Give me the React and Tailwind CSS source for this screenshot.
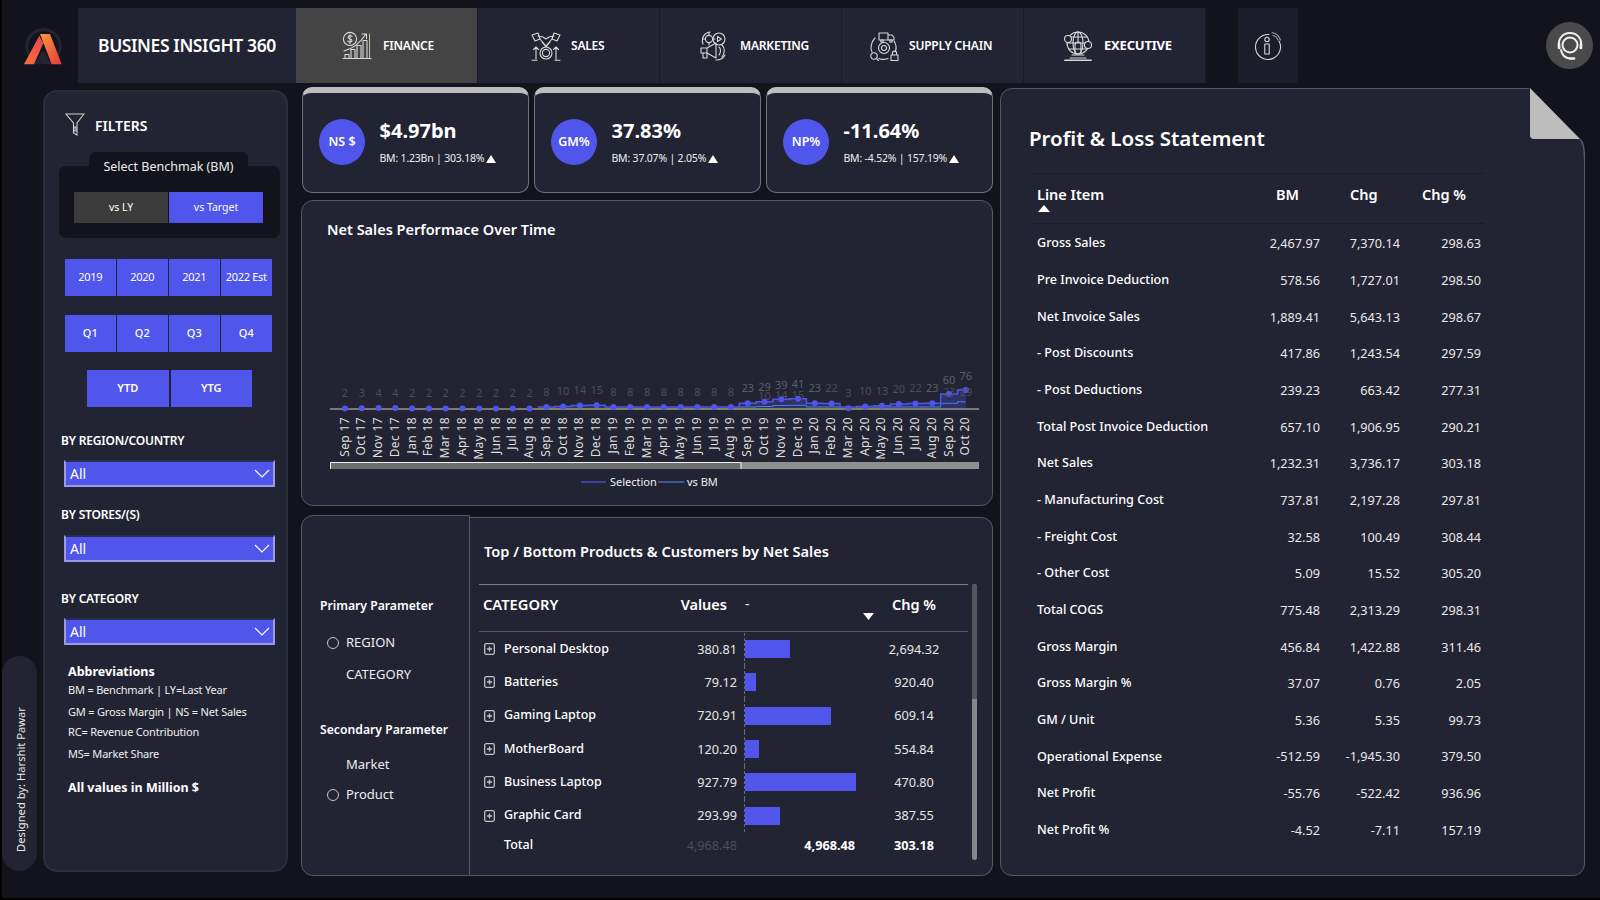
import React from "react";

const FONT = "font-['Noto_Sans','Open_Sans',sans-serif]";
const S = { fill: "none", stroke: "#d9d9d9", strokeWidth: 1.1, strokeLinecap: "round", strokeLinejoin: "round" };

const FinanceIcon = () => (
  <svg width="30" height="30" viewBox="0 0 30 30" {...S}>
    <circle cx="8" cy="8" r="6.6" />
    <path d="M10 5.4c-.8-.9-3.8-1-4 .8-.2 2 4.2 1 4 3.4-.2 1.7-3.2 1.7-4.2.6M8 3.5v9" />
    <path d="M1 27.5h28M3 27.5v-4h4v4M9 27.5v-9h4v9M15 27.5v-13h4v13M21 27.5v-18h4v18" />
    <path d="M2 20c8-2 16-8 22-17M20 3h4.500v4.500" />
    <path d="M27.500 3v24" strokeWidth=".8" />
  </svg>
);
const SalesIcon = () => (
  <svg width="30" height="30" viewBox="0 0 30 30" {...S}>
    <path d="M1 4l6-2 2 6-5 2zM29 4l-6-2-2 6 5 2z" />
    <path d="M7 5l5 1 3 2 3-2 5-1M9 8l6 7 6-7M11 11l4 5 4-5" />
    <circle cx="15" cy="22" r="6" />
    <circle cx="15" cy="22" r="3.600" />
    <path d="M5 28V16M2.500 18.500L5 16l2.500 2.500M25 28V16M22.500 18.500L25 16l2.500 2.500M1 29.300h5M24 29.300h5" />
  </svg>
);
const MarketingIcon = () => (
  <svg width="30" height="30" viewBox="0 0 30 30" {...S}>
    <circle cx="20" cy="8" r="6" />
    <path d="M18.500 5.500l4 2.500-4 2.500z" />
    <circle cx="10" cy="8" r="3.600" />
    <path d="M10 2v2M10 12v2M4 8h2M14 8h2" />
    <path d="M2 17h6l9-5v15l-9-5H2zM8 17v5M4 22v5h4v-5M20 16c2 1.500 2 6 0 8M23 14c3 2.500 3 9 0 12" />
    <path d="M4 13c-2-6 1-11 7-12M26 24c-2 4-6 5-9 5" />
  </svg>
);
const SupplyIcon = () => (
  <svg width="30" height="30" viewBox="0 0 30 30" {...S}>
    <path d="M10 2h9v7h-9zM19 4h4l2 2.500V9h-6" />
    <circle cx="13" cy="10" r="1.300" />
    <circle cx="22" cy="10" r="1.300" />
    <circle cx="15" cy="17" r="5.500" />
    <circle cx="15" cy="17" r="2.500" />
    <path d="M6 7C2 11 1 18 3 21M25 10c2 3 2.500 7 1.500 10M10 27.500c2 1 6 1 9 0" />
    <circle cx="5" cy="25" r="3.200" />
    <path d="M7.500 27.500l2 2" />
    <path d="M22 24h7v5.500h-7zM23.500 24v-2c0-2.500 4-2.500 4 0v2" />
  </svg>
);
const ExecIcon = () => (
  <svg width="30" height="30" viewBox="0 0 30 30" {...S}>
    <circle cx="15" cy="12" r="11" />
    <ellipse cx="15" cy="12" rx="5" ry="11" />
    <path d="M4 12h22M6 6h18M6 18h18M15 1v10" />
    <circle cx="5" cy="8" r="3.500" fill="#222433" />
    <circle cx="25" cy="14" r="3.500" fill="#222433" />
    <path d="M12 22v-8c0-4 6-4 6 0v8M9 24h12M7 27h16" />
    <path d="M2 29.300h26" strokeWidth="1.800" />
  </svg>
);
const InfoIcon = () => (
  <svg width="30" height="30" viewBox="0 0 30 30" {...S}>
    <path d="M26 10A12.500 12.500 0 1 1 16 3.500" />
    <circle cx="14" cy="8.500" r="2.200" />
    <path d="M11.800 13h4.400v10h-4.400z" />
    <path d="M19 1.500c4 .8 7 3.500 8.500 7.500M20 4.500c2.500.5 4 2 5 4.500" stroke="#9a9a9a" />
  </svg>
);
const HeadsetIcon = () => (
  <svg width="30" height="30" viewBox="0 0 30 30" fill="none" stroke="#efefef" strokeWidth="2" strokeLinecap="round">
    <circle cx="15" cy="14" r="7.500" />
    <path d="M4.500 17C2 9 7 2 15 2s13 7 10.500 15" />
    <path d="M4 13v4M26 13v4" strokeWidth="2.600" />
    <path d="M6 19c1 5 4 8 9 8.500" />
    <path d="M15 27.500h4" strokeWidth="2.600" />
  </svg>
);
const Logo = () => (
  <svg width="46" height="48" viewBox="0 0 46 48">
    <defs>
      <linearGradient id="lg1" x1="0" y1="1" x2="1" y2="0">
        <stop offset="0" stopColor="#f4743b" />
        <stop offset="1" stopColor="#e8434f" />
      </linearGradient>
      <linearGradient id="lg2" x1="0" y1="0" x2="1" y2="1">
        <stop offset="0" stopColor="#f59a3c" />
        <stop offset="1" stopColor="#e8393f" />
      </linearGradient>
    </defs>
    <path d="M8 33A16.700 16.700 0 1 1 35 33" fill="none" stroke="#23242f" strokeWidth="3" />
    <path d="M21.300 27L29.700 41.300H12z" fill="#23242f" />
    <path d="M2 41.300H12L21.300 20.300L17.300 12.700z" fill="url(#lg1)" />
    <path d="M18 11H28L39.700 41.300H29.700z" fill="url(#lg2)" />
  </svg>
);

const nav = [
  { t: "FINANCE", I: FinanceIcon, c: "bg-[#444444] pl-[46px]", g: "gap-[11px]", f: "text-[12px] font-semibold" },
  { t: "SALES", I: SalesIcon, c: "pl-[53px]", g: "gap-[10px]", f: "text-[12px] font-semibold" },
  { t: "MARKETING", I: MarketingIcon, c: "pl-[39px]", g: "gap-[11px]", f: "text-[12px] font-semibold" },
  { t: "SUPPLY CHAIN", I: SupplyIcon, c: "pl-[27px]", g: "gap-[10px]", f: "text-[12px] font-semibold" },
  { t: "EXECUTIVE", I: ExecIcon, c: "pl-[39px]", g: "gap-[11px]", f: "text-[13px] font-bold" },
];

const kpis = [
  { k: "NS $", v: "$4.97bn", s: "BM: 1.23Bn | 303.18%" },
  { k: "GM%", v: "37.83%", s: "BM: 37.07% | 2.05%" },
  { k: "NP%", v: "-11.64%", s: "BM: -4.52% | 157.19%" },
];

const years = ["2019", "2020", "2021", "2022 Est"];
const quarters = ["Q1", "Q2", "Q3", "Q4"];

const months = ["Sep 17","Oct 17","Nov 17","Dec 17","Jan 18","Feb 18","Mar 18","Apr 18","May 18","Jun 18","Jul 18","Aug 18","Sep 18","Oct 18","Nov 18","Dec 18","Jan 19","Feb 19","Mar 19","Apr 19","May 19","Jun 19","Jul 19","Aug 19","Sep 19","Oct 19","Nov 19","Dec 19","Jan 20","Feb 20","Mar 20","Apr 20","May 20","Jun 20","Jul 20","Aug 20","Sep 20","Oct 20"];
const vals = [2,3,4,4,2,2,2,2,2,2,2,2,8,10,14,15,8,8,8,8,8,8,8,8,23,29,39,41,23,22,3,10,13,20,22,23,60,76];
const X = (i) => 345 + i * 16.78;
const Y = (v) => 409 - v * 0.25;
const step = (arr, from) => {
  let d = "";
  arr.forEach((v, i) => {
    if (i < from) return;
    d += `${d ? "L" : "M"}${X(i) - 8.4} ${Y(v)}L${X(i) + 8.4 > X(37) ? X(37) : X(i) + 8.4} ${Y(v)}`;
  });
  return d;
};
const bm = vals.map((v, i) => (i >= 12 ? vals[i - 12] : v));

const Chart = () => {
  const line = step(vals, 12);
  const area = `${line}L${X(37)} 409L${X(12) - 8.4} 409Z`;
  return (
    <svg width="690" height="244" viewBox="302 260 690 244" className="block" fontFamily="'Noto Sans','Open Sans',sans-serif">
      <path d={area} fill="#4f55ec" fillOpacity=".28" />
      <path d={step(bm, 24)} fill="none" stroke="#4a7fe0" strokeWidth="1" />
      <path d={line} fill="none" stroke="#4f55ec" strokeWidth="1.500" />
      <path d="M330 409H979" stroke="#77787c" strokeWidth="2" />
      <path d="M537 408.500H880" stroke="#7d8a3c" strokeWidth="1" />
      {vals.map((v, i) => (
        <circle key={i} cx={X(i)} cy={Y(v)} r="3" fill="#4f55ec" />
      ))}
      {vals.map((v, i) => (
        <text key={i} x={X(i)} y={397.5 - v * 0.23} textAnchor="middle" fontSize="11" fill={v >= 23 ? "#5c5e68" : "#4b4d59"}>{v}</text>
      ))}
      {[[25, 10, 400], [26, 14, 399], [27, 15, 399], [36, 23, 396], [37, 29, 396]].map(([i, v, y]) => (
        <text key={i} x={X(i)} y={y} textAnchor="middle" fontSize="11" fill="#4b4d59">{v}</text>
      ))}
      {months.map((m, i) => (
        <text key={m} transform={`translate(${X(i) + 3.5},417) rotate(-90)`} textAnchor="end" fontSize="12" letterSpacing=".35" fill="#dedede">{m}</text>
      ))}
      <rect x="330" y="462" width="649" height="7" fill="#8f8f8f" />
      <rect x="330" y="462" width="411" height="7" fill="#6e6e6e" />
      <path d="M330.500 469V462.500H741V469" fill="none" stroke="#f0f0f0" strokeWidth="1" />
      <path d="M581 482H606" stroke="#4f55ec" strokeWidth="1.200" />
      <text x="610" y="486" fontSize="11" fill="#f0f0f0">Selection</text>
      <path d="M658 482H684" stroke="#4a7fe0" strokeWidth="1.200" />
      <text x="687" y="486" fontSize="11" fill="#f0f0f0">vs BM</text>
    </svg>
  );
};

const cats = [
  ["Personal Desktop", "380.81", 45, "2,694.32"],
  ["Batteries", "79.12", 10.5, "920.40"],
  ["Gaming Laptop", "720.91", 85.5, "609.14"],
  ["MotherBoard", "120.20", 14, "554.84"],
  ["Business Laptop", "927.79", 110.5, "470.80"],
  ["Graphic Card", "293.99", 35, "387.55"],
];

const pl = [
  ["Gross Sales","2,467.97","7,370.14","298.63"],
  ["Pre Invoice Deduction","578.56","1,727.01","298.50"],
  ["Net Invoice Sales","1,889.41","5,643.13","298.67"],
  ["- Post Discounts","417.86","1,243.54","297.59"],
  ["- Post Deductions","239.23","663.42","277.31"],
  ["Total Post Invoice Deduction","657.10","1,906.95","290.21"],
  ["Net Sales","1,232.31","3,736.17","303.18"],
  ["- Manufacturing Cost","737.81","2,197.28","297.81"],
  ["- Freight Cost","32.58","100.49","308.44"],
  ["- Other Cost","5.09","15.52","305.20"],
  ["Total COGS","775.48","2,313.29","298.31"],
  ["Gross Margin","456.84","1,422.88","311.46"],
  ["Gross Margin %","37.07","0.76","2.05"],
  ["GM / Unit","5.36","5.35","99.73"],
  ["Operational Expense","-512.59","-1,945.30","379.50"],
  ["Net Profit","-55.76","-522.42","936.96"],
  ["Net Profit %","-4.52","-7.11","157.19"],
];

const Select = ({ mt }) => (
  <div className={`${mt} ml-[19px] w-[211px] h-[27px] bg-[#5055ec] border-2 border-[#9a9ce0] border-t-[#2a2c50] flex items-center justify-between pl-[4px] pr-[3px]`}>
    <span className="text-[14px] text-white">All</span>
    <svg width="16" height="9" viewBox="0 0 16 9" fill="none" stroke="#fff" strokeWidth="1.200"><path d="M1 1l7 7 7-7" /></svg>
  </div>
);

const Radio = ({ on, label, mt }) => (
  <div className={`${mt} flex items-center h-[18px] pl-[25px] gap-[7px]`}>
    <span className={`w-[12px] h-[12px] rounded-full border ${on ? "border-[#c8c8c8]" : "border-transparent"}`} />
    <span className="text-[13px] text-[#ececec]">{label}</span>
  </div>
);

export default function App() {
  return (
    <div className={`${FONT} w-[1600px] h-[900px] bg-[#12131d] text-white overflow-hidden pt-[8px] border-l-2 border-b-2 border-l-black border-b-black`}>
      {/* Header */}
      <div className="flex h-[75px]">
        <div className="w-[76px] flex items-start pl-[20px] pt-[15px]"><Logo /></div>
        <div className="w-[218px] bg-[#222433] flex items-center pl-[20px] text-[17.500px] font-semibold tracking-[-0.4px] whitespace-nowrap">BUSINES INSIGHT 360</div>
        {nav.map(({ t, I, c, g, f }) => (
          <div key={t} className={`w-[182px] flex items-center border-r border-[#191a27] bg-[#222433] ${c} ${g}`}>
            <I />
            <span className={`${f} tracking-[-0.2px]`}>{t}</span>
          </div>
        ))}
        <div className="ml-[32px] w-[60px] bg-[#1c1d2a] flex items-center justify-center"><InfoIcon /></div>
        <div className="ml-auto mr-[7px] mt-[14px] w-[47px] h-[47px] rounded-full bg-[#4a4a4a] flex items-center justify-center"><HeadsetIcon /></div>
      </div>

      {/* Main */}
      <div className="flex mt-[4px] h-[789px] pl-0">
        {/* Pill */}
        <div className="self-end mb-[5px] w-[35px] h-[215px] rounded-[18px] bg-[#222433] flex items-end justify-center pb-[19px] pl-[3px]">
          <span className="[writing-mode:vertical-rl] rotate-180 text-[11.200px] text-[#e8e8e8] whitespace-nowrap">Designed by: Harshit Pawar</span>
        </div>

        {/* Sidebar */}
        <div className="ml-[6px] mt-[3px] w-[245px] h-[782px] bg-[#222433] rounded-[14px] border-2 border-[#2b2d3b]">
          <div className="flex items-center pt-[21px] pl-[20px] h-[45px]">
            <svg width="20" height="24" viewBox="0 0 20 24" fill="none" stroke="#cfcfcf" strokeWidth="1.100"><path d="M1 1h18l-7 9v12l-3.500-2V10z" /><path d="M9 14h2v4H9z" /></svg>
            <span className="ml-[10px] text-[14px] font-semibold">FILTERS</span>
          </div>
          <div className="mt-[15px] ml-[44px] w-[159px] h-[14px] bg-[#12131d] rounded-t-[6px] relative">
            <span className="absolute left-0 right-0 top-[6px] text-center text-[12.500px] text-[#ececec] whitespace-nowrap">Select Benchmak (BM)</span>
          </div>
          <div className="ml-[14px] w-[221px] h-[72px] bg-[#12131d] rounded-[7px] pt-[26px] pl-[15px] flex">
            <div className="w-[94px] h-[31px] bg-[#3b3b3b] flex items-center justify-center text-[10.500px]">vs LY</div>
            <div className="ml-[1px] w-[94px] h-[31px] bg-[#5055ec] flex items-center justify-center text-[10.500px]">vs Target</div>
          </div>
          <div className="mt-[21px] ml-[20px] flex gap-[1.500px]">
            {years.map((y) => (
              <div key={y} className="w-[50.500px] h-[37px] bg-[#5055ec] flex items-center justify-center text-[11px] whitespace-nowrap tracking-[-0.3px]">{y}</div>
            ))}
          </div>
          <div className="mt-[19px] ml-[20px] flex gap-[1.500px]">
            {quarters.map((y) => (
              <div key={y} className="w-[50.500px] h-[37px] bg-[#5055ec] flex items-center justify-center text-[11px] font-medium">{y}</div>
            ))}
          </div>
          <div className="mt-[18px] ml-[42px] flex gap-[2px]">
            {["YTD", "YTG"].map((y) => (
              <div key={y} className="w-[81.500px] h-[37px] bg-[#5055ec] flex items-center justify-center text-[11px] font-semibold">{y}</div>
            ))}
          </div>
          <div className="mt-[25px] ml-[16px] text-[12px] font-semibold h-[17px] leading-[17px] tracking-[-0.2px]">BY REGION/COUNTRY</div>
          <Select mt="mt-[11px]" />
          <div className="mt-[19px] ml-[16px] text-[12px] font-semibold h-[17px] leading-[17px] tracking-[-0.2px]">BY STORES/(S)</div>
          <Select mt="mt-[12px]" />
          <div className="mt-[28px] ml-[16px] text-[12px] font-semibold h-[17px] leading-[17px] tracking-[-0.2px]">BY CATEGORY</div>
          <Select mt="mt-[11px]" />
          <div className="mt-[18px] ml-[23px] text-[12.500px] font-bold h-[17px] leading-[17px]">Abbreviations</div>
          <div className="mt-[1px] ml-[23px] text-[11px] h-[18px] leading-[18px] tracking-[-0.2px] text-[#eee]">BM = Benchmark | LY=Last Year</div>
          <div className="mt-[4px] ml-[23px] text-[11px] h-[18px] leading-[18px] tracking-[-0.2px] text-[#eee]">GM = Gross Margin | NS = Net Sales</div>
          <div className="mt-[2px] ml-[23px] text-[11px] h-[18px] leading-[18px] tracking-[-0.2px] text-[#eee]">RC= Revenue Contribution</div>
          <div className="mt-[4px] ml-[23px] text-[11px] h-[18px] leading-[18px] tracking-[-0.2px] text-[#eee]">MS= Market Share</div>
          <div className="mt-[16px] ml-[23px] text-[12.500px] font-bold h-[18px] leading-[18px]">All values in Million $</div>
        </div>

        {/* Middle */}
        <div className="ml-[13px] w-[692px] flex flex-col">
          <div className="flex gap-[5px] pl-[1px] h-[106px]">
            {kpis.map((k) => (
              <div key={k.k} className="w-[227px] h-[106px] bg-[#222433] rounded-[10px] border-[1.500px] border-[#6e7080] border-t-[6px] border-t-[#bdbdbd] flex items-start pt-[26px] pl-[16px]">
                <div className="w-[46px] h-[46px] rounded-full bg-[#5055ec] flex items-center justify-center text-[12.500px] font-semibold shrink-0">{k.k}</div>
                <div className="ml-[14.500px] -mt-[2px]">
                  <div className="text-[20px] font-bold leading-[28px]">{k.v}</div>
                  <div className="mt-[6px] text-[10.500px] leading-[15px] whitespace-nowrap tracking-[-0.2px] text-[#eee] flex items-center gap-[2px]">
                    <span>{k.s}</span>
                    <svg width="10" height="8" viewBox="0 0 10 8"><path d="M0 8h10L5 0z" fill="#fff" /></svg>
                  </div>
                </div>
              </div>
            ))}
          </div>

          <div className="mt-[7px] h-[306px] bg-[#222433] rounded-[12px] border-[1.500px] border-[#565868] overflow-hidden">
            <div className="h-[58.500px] pt-[17px] pl-[25px] text-[14.500px] font-semibold leading-[22px]">Net Sales Performace Over Time</div>
            <Chart />
          </div>

          <div className="mt-[9px] h-[361px] flex">
            {/* Parameters */}
            <div className="w-[169px] h-[361px] bg-[#222433] rounded-l-[12px] border-[1.500px] border-[#565868] pt-[81px]">
              <div className="pl-[18px] text-[12.200px] font-semibold h-[18px] leading-[18px] whitespace-nowrap">Primary Parameter</div>
              <Radio on label="REGION" mt="mt-[19px]" />
              <Radio label="CATEGORY" mt="mt-[14px]" />
              <div className="mt-[37px] pl-[18px] text-[12.200px] font-semibold h-[18px] leading-[18px] whitespace-nowrap">Secondary Parameter</div>
              <Radio label="Market" mt="mt-[17px]" />
              <Radio on label="Product" mt="mt-[12px]" />
            </div>
            {/* Table */}
            <div className="mt-[2px] w-[523px] h-[359px] bg-[#222433] rounded-r-[12px] border-[1.500px] border-l-0 border-[#565868]">
              <div className="h-[66px] pt-[22px] pl-[14px] text-[14.600px] font-semibold leading-[22px] whitespace-nowrap">Top / Bottom Products &amp; Customers by Net Sales</div>
              <div className="flex">
                <div className="ml-[9px] w-[489px]">
                  <div className="h-[47.500px] border-t-[1.500px] border-b-[1.500px] border-t-[#7a7c88] border-b-[#565868] grid grid-cols-[258px_7px_136px_68px] relative">
                    <div className="relative pl-[4px] pt-[8px] text-[14.700px] font-semibold leading-[22px]">CATEGORY<span className="absolute right-[10px] top-[8px] text-[14.500px]">Values</span></div>
                    <div />
                    <div className="pt-[8px] text-[14px] leading-[22px] relative pl-[1px]">-<svg className="absolute left-[119px] top-[28px]" width="11" height="7" viewBox="0 0 11 7"><path d="M0 0h11L5.500 7z" fill="#fff" /></svg></div>
                    <div className="pt-[8px] text-center text-[14.500px] font-semibold leading-[22px] whitespace-nowrap">Chg %</div>
                  </div>
                  <div className="pt-[1px]">
                    {cats.map(([n, v, w, c]) => (
                      <div key={n} className="h-[33.300px] grid grid-cols-[258px_7px_136px_68px] items-center text-[12.700px]">
                        <div className="flex items-center pl-[5px]">
                          <svg width="11" height="12" viewBox="0 0 11 12" fill="none" stroke="#c4c4c4" strokeWidth="1.300"><rect x=".7" y=".7" width="9.600" height="10.600" rx="1.500" /><path d="M3 6h5M5.500 3.500v5" /></svg>
                          <span className="ml-[9px] font-medium text-[12.500px]">{n}</span>
                          <span className="ml-auto text-[#e6e6e6]">{v}</span>
                        </div>
                        <div />
                        <div className="h-full flex items-center border-l border-dashed border-[#6a6b75]">
                          <div className="h-[18px] bg-[#5055ec]" style={{ width: w }} />
                        </div>
                        <div className="text-center text-[#e6e6e6] whitespace-nowrap">{c}</div>
                      </div>
                    ))}
                  </div>
                  <div className="h-[26px] grid grid-cols-[258px_7px_136px_68px] items-center text-[12.700px]">
                    <div className="flex pl-[25px]">
                      <span className="font-medium text-[12.500px]">Total</span>
                      <span className="ml-auto text-[#4b4d59]">4,968.48</span>
                    </div>
                    <div />
                    <div className="pr-[25px] text-right font-bold">4,968.48</div>
                    <div className="text-center font-bold">303.18</div>
                  </div>
                </div>
                <div className="ml-[4px] w-[5px] h-[276px] rounded-full bg-[#85858c] overflow-hidden">
                  <div className="h-[115px] bg-[#55565f]" />
                </div>
              </div>
            </div>
          </div>
        </div>

        {/* P&L */}
        <div className="ml-[7px] mt-[1px] w-[585px] h-[788px] bg-[#222433] rounded-[12px] border-[1.500px] border-[#565868] relative pt-[34px] pl-[28px]">
          <svg className="absolute -top-[2px] -right-[2px] block" width="57" height="72" viewBox="0 0 57 72">
            <path d="M0 0H57V72H55.500C55.500 62 54 55 51 52L0 1Z" fill="#12131d" />
            <path d="M51 52C54 55 55.500 62 55.500 72" fill="none" stroke="#565868" strokeWidth="1.500" />
            <path d="M1 1L51 52H5Q1 52 1 48Z" fill="#bdbdbd" />
          </svg>
          <div className="text-[20.500px] font-semibold leading-[30px]">Profit &amp; Loss Statement</div>
          <div className="mt-[20px] ml-[3px] w-[452px] h-[51px] border-t border-b border-[#1a1b28] pl-[5px] pt-[9px] grid grid-cols-[203px_80px_80px_81px] text-[14.500px] font-semibold leading-[22px]">
            <div className="relative">Line Item<svg className="absolute left-[1px] top-[22px]" width="12" height="7" viewBox="0 0 12 7"><path d="M0 7h12L6 0z" fill="#fff" /></svg></div>
            <div className="pl-[36px]">BM</div>
            <div className="pl-[30px]">Chg</div>
            <div className="pl-[22px] whitespace-nowrap">Chg %</div>
          </div>
          <div className="pl-[8px]">
            {pl.map(([n, a, b, c]) => (
              <div key={n} className="h-[36.670px] grid grid-cols-[203px_80px_80px_81px] items-center text-[12.700px] first:mt-[1.500px]">
                <div className="font-medium whitespace-nowrap text-[12.600px]">{n}</div>
                <div className="text-right text-[#e8e8e8]">{a}</div>
                <div className="text-right text-[#e8e8e8]">{b}</div>
                <div className="text-right text-[#e8e8e8]">{c}</div>
              </div>
            ))}
          </div>
        </div>
      </div>
    </div>
  );
}
